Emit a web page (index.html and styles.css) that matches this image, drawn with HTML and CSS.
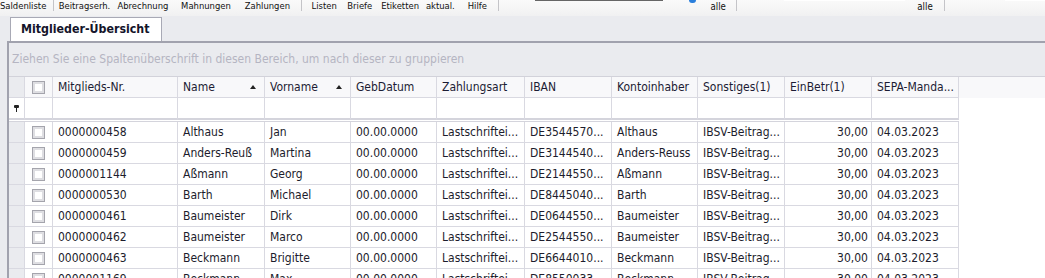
FILE: index.html
```html
<!DOCTYPE html>
<html lang="de">
<head>
    <meta charset="UTF-8">
    <title>Mitglieder-Übersicht</title>
    <link rel="stylesheet" href="styles.css">
</head>
<body>
    <div class="toolbar">
        <span class="tb-item w-salden">Saldenliste</span>
        <span class="tb-sep"></span>
        <span class="tb-item w-beitrag">Beitragserh.</span>
        <span class="tb-item w-abr">Abrechnung</span>
        <span class="tb-item w-mahn">Mahnungen</span>
        <span class="tb-item w-zahl">Zahlungen</span>
        <span class="tb-sep"></span>
        <span class="tb-item w-listen">Listen</span>
        <span class="tb-item w-briefe">Briefe</span>
        <span class="tb-item w-etik">Etiketten</span>
        <span class="tb-item w-akt">aktual.</span>
        <span class="tb-item w-hilfe">Hilfe</span>
        <span class="tb-sep"></span>
        <div class="filter-box first">
            <span class="combo-line"></span>
            <span class="combo-arrow"></span>
            <span class="filter-label">alle</span>
        </div>
        <span class="tb-sep"></span>
        <div class="filter-box second">
            <span class="white-line"></span>
            <span class="filter-label">alle</span>
        </div>
        <span class="tb-sep"></span>
        <span class="white-line tail"></span>
    </div>

    <div class="workspace">
        <div class="tabs">
            <div class="tab">Mitglieder-Übersicht</div>
        </div>
        <div class="panel">
            <div class="group-panel">Ziehen Sie eine Spaltenüberschrift in diesen Bereich, um nach dieser zu gruppieren</div>
            <div class="grid">
                <div class="head-row">
                    <div class="row">
                        <div class="cell ind"></div>
                        <div class="cell check"><span class="box"></span></div>
                        <div class="cell">Mitglieds-Nr.</div>
                        <div class="cell sorted">Name<span class="sort-up"></span></div>
                        <div class="cell sorted">Vorname<span class="sort-up"></span></div>
                        <div class="cell">GebDatum</div>
                        <div class="cell">Zahlungsart</div>
                        <div class="cell">IBAN</div>
                        <div class="cell">Kontoinhaber</div>
                        <div class="cell">Sonstiges(1)</div>
                        <div class="cell">EinBetr(1)</div>
                        <div class="cell">SEPA-Manda...</div>
                    </div>
                </div>
                <div class="row filter-row">
                    <div class="cell ind">
                        <svg class="pin" width="5" height="7" viewBox="0 0 5 7">
                            <rect x="0" y="0" width="5" height="3" rx="1" fill="#222"/>
                            <rect x="2" y="3" width="1" height="4" fill="#222"/>
                        </svg>
                    </div>
                    <div class="cell"></div>
                    <div class="cell"></div>
                    <div class="cell"></div>
                    <div class="cell"></div>
                    <div class="cell"></div>
                    <div class="cell"></div>
                    <div class="cell"></div>
                    <div class="cell"></div>
                    <div class="cell"></div>
                    <div class="cell"></div>
                    <div class="cell"></div>
                </div>
                <div class="body">
                    <div class="row data-row">
                        <div class="cell ind"></div>
                        <div class="cell check"><span class="box"></span></div>
                        <div class="cell">0000000458</div>
                        <div class="cell">Althaus</div>
                        <div class="cell">Jan</div>
                        <div class="cell">00.00.0000</div>
                        <div class="cell">Lastschriftei...</div>
                        <div class="cell">DE3544570...</div>
                        <div class="cell">Althaus</div>
                        <div class="cell">IBSV-Beitrag...</div>
                        <div class="cell num">30,00</div>
                        <div class="cell">04.03.2023</div>
                    </div>
                    <div class="row data-row">
                        <div class="cell ind"></div>
                        <div class="cell check"><span class="box"></span></div>
                        <div class="cell">0000000459</div>
                        <div class="cell">Anders-Reuß</div>
                        <div class="cell">Martina</div>
                        <div class="cell">00.00.0000</div>
                        <div class="cell">Lastschriftei...</div>
                        <div class="cell">DE3144540...</div>
                        <div class="cell">Anders-Reuss</div>
                        <div class="cell">IBSV-Beitrag...</div>
                        <div class="cell num">30,00</div>
                        <div class="cell">04.03.2023</div>
                    </div>
                    <div class="row data-row">
                        <div class="cell ind"></div>
                        <div class="cell check"><span class="box"></span></div>
                        <div class="cell">0000001144</div>
                        <div class="cell">Aßmann</div>
                        <div class="cell">Georg</div>
                        <div class="cell">00.00.0000</div>
                        <div class="cell">Lastschriftei...</div>
                        <div class="cell">DE2144550...</div>
                        <div class="cell">Aßmann</div>
                        <div class="cell">IBSV-Beitrag...</div>
                        <div class="cell num">30,00</div>
                        <div class="cell">04.03.2023</div>
                    </div>
                    <div class="row data-row">
                        <div class="cell ind"></div>
                        <div class="cell check"><span class="box"></span></div>
                        <div class="cell">0000000530</div>
                        <div class="cell">Barth</div>
                        <div class="cell">Michael</div>
                        <div class="cell">00.00.0000</div>
                        <div class="cell">Lastschriftei...</div>
                        <div class="cell">DE8445040...</div>
                        <div class="cell">Barth</div>
                        <div class="cell">IBSV-Beitrag...</div>
                        <div class="cell num">30,00</div>
                        <div class="cell">04.03.2023</div>
                    </div>
                    <div class="row data-row">
                        <div class="cell ind"></div>
                        <div class="cell check"><span class="box"></span></div>
                        <div class="cell">0000000461</div>
                        <div class="cell">Baumeister</div>
                        <div class="cell">Dirk</div>
                        <div class="cell">00.00.0000</div>
                        <div class="cell">Lastschriftei...</div>
                        <div class="cell">DE0644550...</div>
                        <div class="cell">Baumeister</div>
                        <div class="cell">IBSV-Beitrag...</div>
                        <div class="cell num">30,00</div>
                        <div class="cell">04.03.2023</div>
                    </div>
                    <div class="row data-row">
                        <div class="cell ind"></div>
                        <div class="cell check"><span class="box"></span></div>
                        <div class="cell">0000000462</div>
                        <div class="cell">Baumeister</div>
                        <div class="cell">Marco</div>
                        <div class="cell">00.00.0000</div>
                        <div class="cell">Lastschriftei...</div>
                        <div class="cell">DE2544550...</div>
                        <div class="cell">Baumeister</div>
                        <div class="cell">IBSV-Beitrag...</div>
                        <div class="cell num">30,00</div>
                        <div class="cell">04.03.2023</div>
                    </div>
                    <div class="row data-row">
                        <div class="cell ind"></div>
                        <div class="cell check"><span class="box"></span></div>
                        <div class="cell">0000000463</div>
                        <div class="cell">Beckmann</div>
                        <div class="cell">Brigitte</div>
                        <div class="cell">00.00.0000</div>
                        <div class="cell">Lastschriftei...</div>
                        <div class="cell">DE6644010...</div>
                        <div class="cell">Beckmann</div>
                        <div class="cell">IBSV-Beitrag...</div>
                        <div class="cell num">30,00</div>
                        <div class="cell">04.03.2023</div>
                    </div>
                    <div class="row data-row">
                        <div class="cell ind"></div>
                        <div class="cell check"><span class="box"></span></div>
                        <div class="cell">0000001169</div>
                        <div class="cell">Beckmann</div>
                        <div class="cell">Max</div>
                        <div class="cell">00.00.0000</div>
                        <div class="cell">Lastschriftei...</div>
                        <div class="cell">DE8550033...</div>
                        <div class="cell">Beckmann</div>
                        <div class="cell">IBSV-Beitrag...</div>
                        <div class="cell num">30,00</div>
                        <div class="cell">04.03.2023</div>
                    </div>
                </div>
            </div>
        </div>
    </div>
</body>
</html>
```

FILE: styles.css
```css
* {
    box-sizing: border-box;
}
body {
    margin: 0;
    height: 278px;
    overflow: hidden;
    background-color: #eaebef;
    font-family: "DejaVu Sans Condensed", "DejaVu Sans", sans-serif;
    font-stretch: condensed;
    color: #1c1c2c;
}

/* top toolbar (only its lower edge is visible) */
.toolbar {
    display: flex;
    align-items: flex-start;
    height: 16px;
    background: linear-gradient(#fafafa, #f1f1f2);
    font-size: 9.4px;
    color: #111;
}
.tb-item {
    line-height: 12px;
    white-space: nowrap;
}
.w-salden { width: 53px; }
.w-beitrag { width: 59px; margin-left: 5px; }
.w-abr { width: 64px; }
.w-mahn { width: 64px; }
.w-zahl { width: 56px; }
.w-listen { width: 36px; margin-left: 10px; }
.w-briefe { width: 34px; }
.w-etik { width: 45px; }
.w-akt { width: 42px; }
.w-hilfe { width: 30px; }
.tb-sep {
    width: 1px;
    height: 11px;
    background-color: #c4c4c8;
}
.filter-box {
    display: flex;
    align-items: flex-start;
    height: 14px;
}
.filter-box.first {
    width: 239px;
}
.filter-box.second {
    width: 208px;
}
.combo-line {
    width: 128px;
    height: 1px;
    margin-left: 36px;
    background-color: #666;
}
.combo-arrow {
    width: 7px;
    height: 3px;
    margin-left: 26px;
    background-color: #2a7fdc;
    border-radius: 0 0 4px 4px;
}
.filter-label {
    margin-top: 2px;
    font-size: 9.6px;
    line-height: 10px;
}
.first .filter-label {
    margin-left: 15px;
}
.second .filter-label {
    margin-left: 12px;
}
.white-line {
    width: 121px;
    height: 1px;
    margin-left: 47px;
    background-color: #fff;
}
.white-line.tail {
    width: 40px;
    margin-left: 60px;
}

/* document tab */
.tabs {
    display: flex;
    padding: 1px 0 0 10px;
}
.tab {
    width: 152px;
    height: 24px;
    padding-left: 10px;
    border: 1px solid #a8a9b5;
    border-bottom: none;
    background-color: #fff;
    font-weight: bold;
    font-size: 12.3px;
    line-height: 23px;
    color: #14142a;
}

.panel {
    margin-left: 7px;
    border-top: 2px solid #a1a2ae;
    border-left: 2px solid #a1a2ae;
    height: 240px;
}
.group-panel {
    height: 33px;
    padding-left: 3px;
    line-height: 33px;
    font-size: 12px;
    color: #b5b5c2;
    white-space: nowrap;
}

/* grid */
.grid {
    background-color: #fff;
    height: 205px;
    font-size: 12px;
}
.row {
    display: grid;
    grid-template-columns: 16px 28px 125px 87px 86px 86px 88px 87px 86px 87px 87px 87px;
    width: 950px;
}
.cell {
    height: 21px;
    padding: 0 3px 0 5px;
    border-right: 1px solid #d9d9e1;
    border-bottom: 1px solid #d9d9e1;
    line-height: 20px;
    white-space: nowrap;
    overflow: hidden;
}
.head-row {
    border-top: 1px solid #d2d2da;
    background-color: #f8f8fa;
    color: #1c1c34;
}
.ind {
    padding: 0;
    background-color: #eaebef;
}
.check {
    display: flex;
    align-items: center;
    justify-content: center;
    padding: 0;
}
.box {
    width: 13px;
    height: 13px;
    border: 1px solid #a4a4ac;
    background-color: #fff;
    box-shadow: inset 0 0 0 2px #dedee2;
}
.sorted {
    display: flex;
    justify-content: space-between;
    align-items: center;
}
.sort-up {
    width: 0;
    height: 0;
    margin-right: 5px;
    border-left: 3px solid transparent;
    border-right: 3px solid transparent;
    border-bottom: 4px solid #222;
}
.filter-row .cell {
    height: 22px;
    border-bottom: 2px solid #d4d4dc;
}
.filter-row .ind {
    background-color: #fff;
    display: flex;
    align-items: center;
    padding-left: 5px;
}
.body {
    width: 950px;
    margin-top: 1px;
    border-top: 1px solid #d4d4dc;
}
.num {
    text-align: right;
}
```
